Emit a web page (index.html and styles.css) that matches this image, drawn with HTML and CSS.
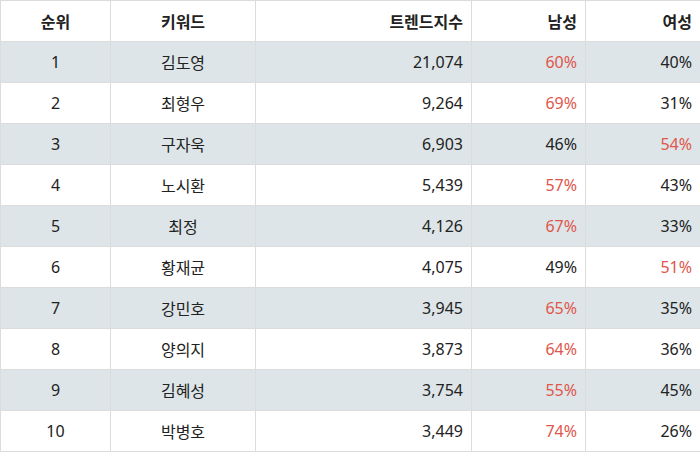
FILE: index.html
```html
<!DOCTYPE html>
<html lang="ko">
<head>
<meta charset="utf-8">
<link rel="stylesheet" href="styles.css">
</head>
<body>
<table class="rank">
  <colgroup>
    <col class="c1"><col class="c2"><col class="c3"><col class="c4"><col class="c5">
  </colgroup>
  <thead>
    <tr><th class="ctr">순위</th><th class="ctr">키워드</th><th class="rt">트렌드지수</th><th class="rt">남성</th><th class="rt">여성</th></tr>
  </thead>
  <tbody>
    <tr><td class="ctr">1</td><td class="ctr">김도영</td><td class="rt">21,074</td><td class="rt hi">60%</td><td class="rt">40%</td></tr>
    <tr><td class="ctr">2</td><td class="ctr">최형우</td><td class="rt">9,264</td><td class="rt hi">69%</td><td class="rt">31%</td></tr>
    <tr><td class="ctr">3</td><td class="ctr">구자욱</td><td class="rt">6,903</td><td class="rt">46%</td><td class="rt hi">54%</td></tr>
    <tr><td class="ctr">4</td><td class="ctr">노시환</td><td class="rt">5,439</td><td class="rt hi">57%</td><td class="rt">43%</td></tr>
    <tr><td class="ctr">5</td><td class="ctr">최정</td><td class="rt">4,126</td><td class="rt hi">67%</td><td class="rt">33%</td></tr>
    <tr><td class="ctr">6</td><td class="ctr">황재균</td><td class="rt">4,075</td><td class="rt">49%</td><td class="rt hi">51%</td></tr>
    <tr><td class="ctr">7</td><td class="ctr">강민호</td><td class="rt">3,945</td><td class="rt hi">65%</td><td class="rt">35%</td></tr>
    <tr><td class="ctr">8</td><td class="ctr">양의지</td><td class="rt">3,873</td><td class="rt hi">64%</td><td class="rt">36%</td></tr>
    <tr><td class="ctr">9</td><td class="ctr">김혜성</td><td class="rt">3,754</td><td class="rt hi">55%</td><td class="rt">45%</td></tr>
    <tr><td class="ctr">10</td><td class="ctr">박병호</td><td class="rt">3,449</td><td class="rt hi">74%</td><td class="rt">26%</td></tr>
  </tbody>
</table>
</body>
</html>
```
FILE: styles.css
```css
html, body {
  margin: 0;
  padding: 0;
  background: #fff;
}
.rank {
  border-collapse: collapse;
  width: 700px;
  table-layout: fixed;
  font-family: "Noto Sans", "Noto Sans CJK KR", sans-serif;
  font-size: 16px;
  color: #222;
}
.c1 { width: 110px; }
.c2 { width: 145px; }
.c3 { width: 216px; }
.c4 { width: 114px; }
.c5 { width: 115px; }
.rank th, .rank td {
  border: 1px solid #dcdcdc;
  height: 40px;
  padding: 0 8px;
  box-sizing: border-box;
  white-space: nowrap;
}
.rank th {
  font-weight: 700;
  color: #222;
}
.rank tr { height: 41px; }
.rank tbody tr:nth-child(odd) td {
  background: #dde5e8;
}
.ctr { text-align: center; }
.rt { text-align: right; }
.hi { color: #e0564c; }
```
